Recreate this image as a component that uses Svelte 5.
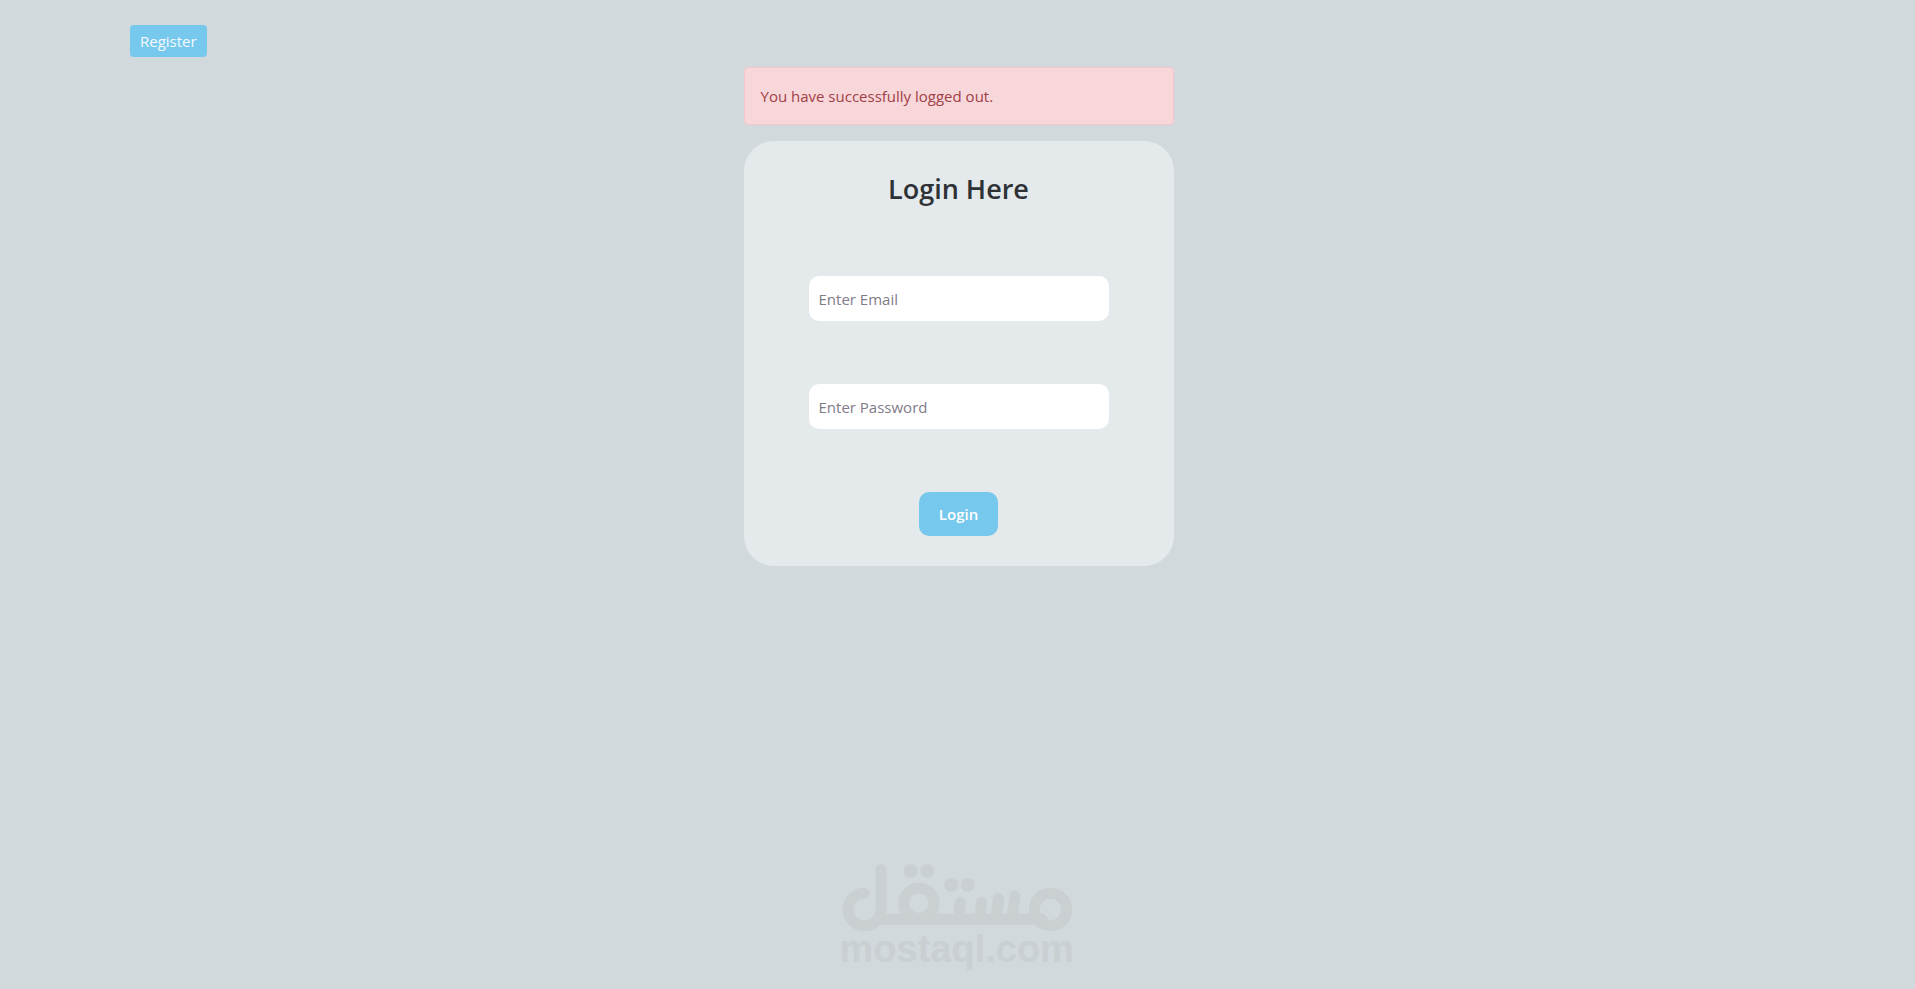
<script>
  let email = $state('');
  let password = $state('');
</script>

<div class="page">
  <header class="container">
    <a class="register" href="#register">Register</a>
  </header>

  <main>
    <div class="alert" role="alert">You have successfully logged out.</div>

    <form class="card" onsubmit={(e) => e.preventDefault()}>
      <h1>Login Here</h1>
      <input type="email" aria-label="Email" placeholder="Enter Email" bind:value={email} />
      <input type="password" aria-label="Password" placeholder="Enter Password" bind:value={password} />
      <button type="submit">Login</button>
    </form>
  </main>

  <svg class="watermark" viewBox="2 0 251 130" width="251" height="130" aria-hidden="true">
    <g class="script">
      <path d="M33.6 42.3A16.2 16.2 0 0 0 33.6 74.7A17 16.2 0 0 0 50.6 58.5V18.6" />
      <path d="M47 68.3H212" />
      <circle cx="88.4" cy="52.2" r="15.2" />
      <path d="M130 51.5L128 67M151 51.5L149.2 67M168 47.5L165.7 67M184.5 45L181.7 67" />
      <circle cx="220" cy="58.5" r="16.2" />
    </g>
    <g class="solid">
      <circle cx="80.2" cy="20" r="7" />
      <circle cx="96.8" cy="20" r="7" />
      <circle cx="120.8" cy="34" r="7" />
      <circle cx="137.2" cy="34" r="7" />
      <text x="9" y="111">mostaql.com</text>
    </g>
  </svg>
</div>

<style>
  :global(body) {
    background: #d1d9dc;
  }

  .page {
    position: relative;
    box-sizing: border-box;
    min-height: 100vh;
    padding-top: 25px;
    font-family: 'Open Sans', 'Noto Sans', sans-serif;
    font-size: 15px;
    line-height: 24px;
  }

  .container {
    display: flex;
    padding: 0 130px;
  }

  .register {
    padding: 4px 10px;
    border-radius: 4px;
    background: #77c8ed;
    color: #f4fafd;
    text-decoration: none;
  }

  main {
    display: flex;
    flex-direction: column;
    gap: 16px;
    width: 430px;
    max-width: 100%;
    margin: 10px auto 0;
    padding-left: 2px;
  }

  .alert {
    padding: 16px;
    border: 1px solid #f5c6cb;
    border-radius: 4px;
    background: #f8d7da;
    color: #a04046;
  }

  .card {
    display: flex;
    flex-direction: column;
    align-items: center;
    padding: 30px 64px;
    border-radius: 30px;
    background: #e4e9eb;
  }

  h1 {
    margin: 0 0 69px;
    color: #2e3136;
    font-size: 27px;
    font-weight: 600;
    line-height: 36px;
  }

  input {
    box-sizing: border-box;
    width: 300px;
    max-width: 100%;
    height: 45px;
    margin-bottom: 63px;
    padding: 0 10px;
    border: 0;
    border-radius: 10px;
    background: #fff;
    color: #2e3136;
    font: inherit;
  }

  input::placeholder {
    color: #7f7b89;
    opacity: 1;
  }

  button {
    padding: 10px 20px;
    border: 0;
    border-radius: 10px;
    background: #77c8ed;
    color: #fff;
    font: inherit;
    font-weight: 600;
    line-height: 24px;
  }

  .watermark {
    position: absolute;
    bottom: 8px;
    left: 50%;
    transform: translateX(-50%);
    pointer-events: none;
  }

  .script {
    fill: none;
    stroke: #cacfd2;
    stroke-width: 11;
    stroke-linecap: round;
  }

  .solid {
    fill: #cacfd2;
  }

  text {
    font-family: 'Liberation Sans', sans-serif;
    font-size: 38px;
    font-weight: 700;
  }
</style>
